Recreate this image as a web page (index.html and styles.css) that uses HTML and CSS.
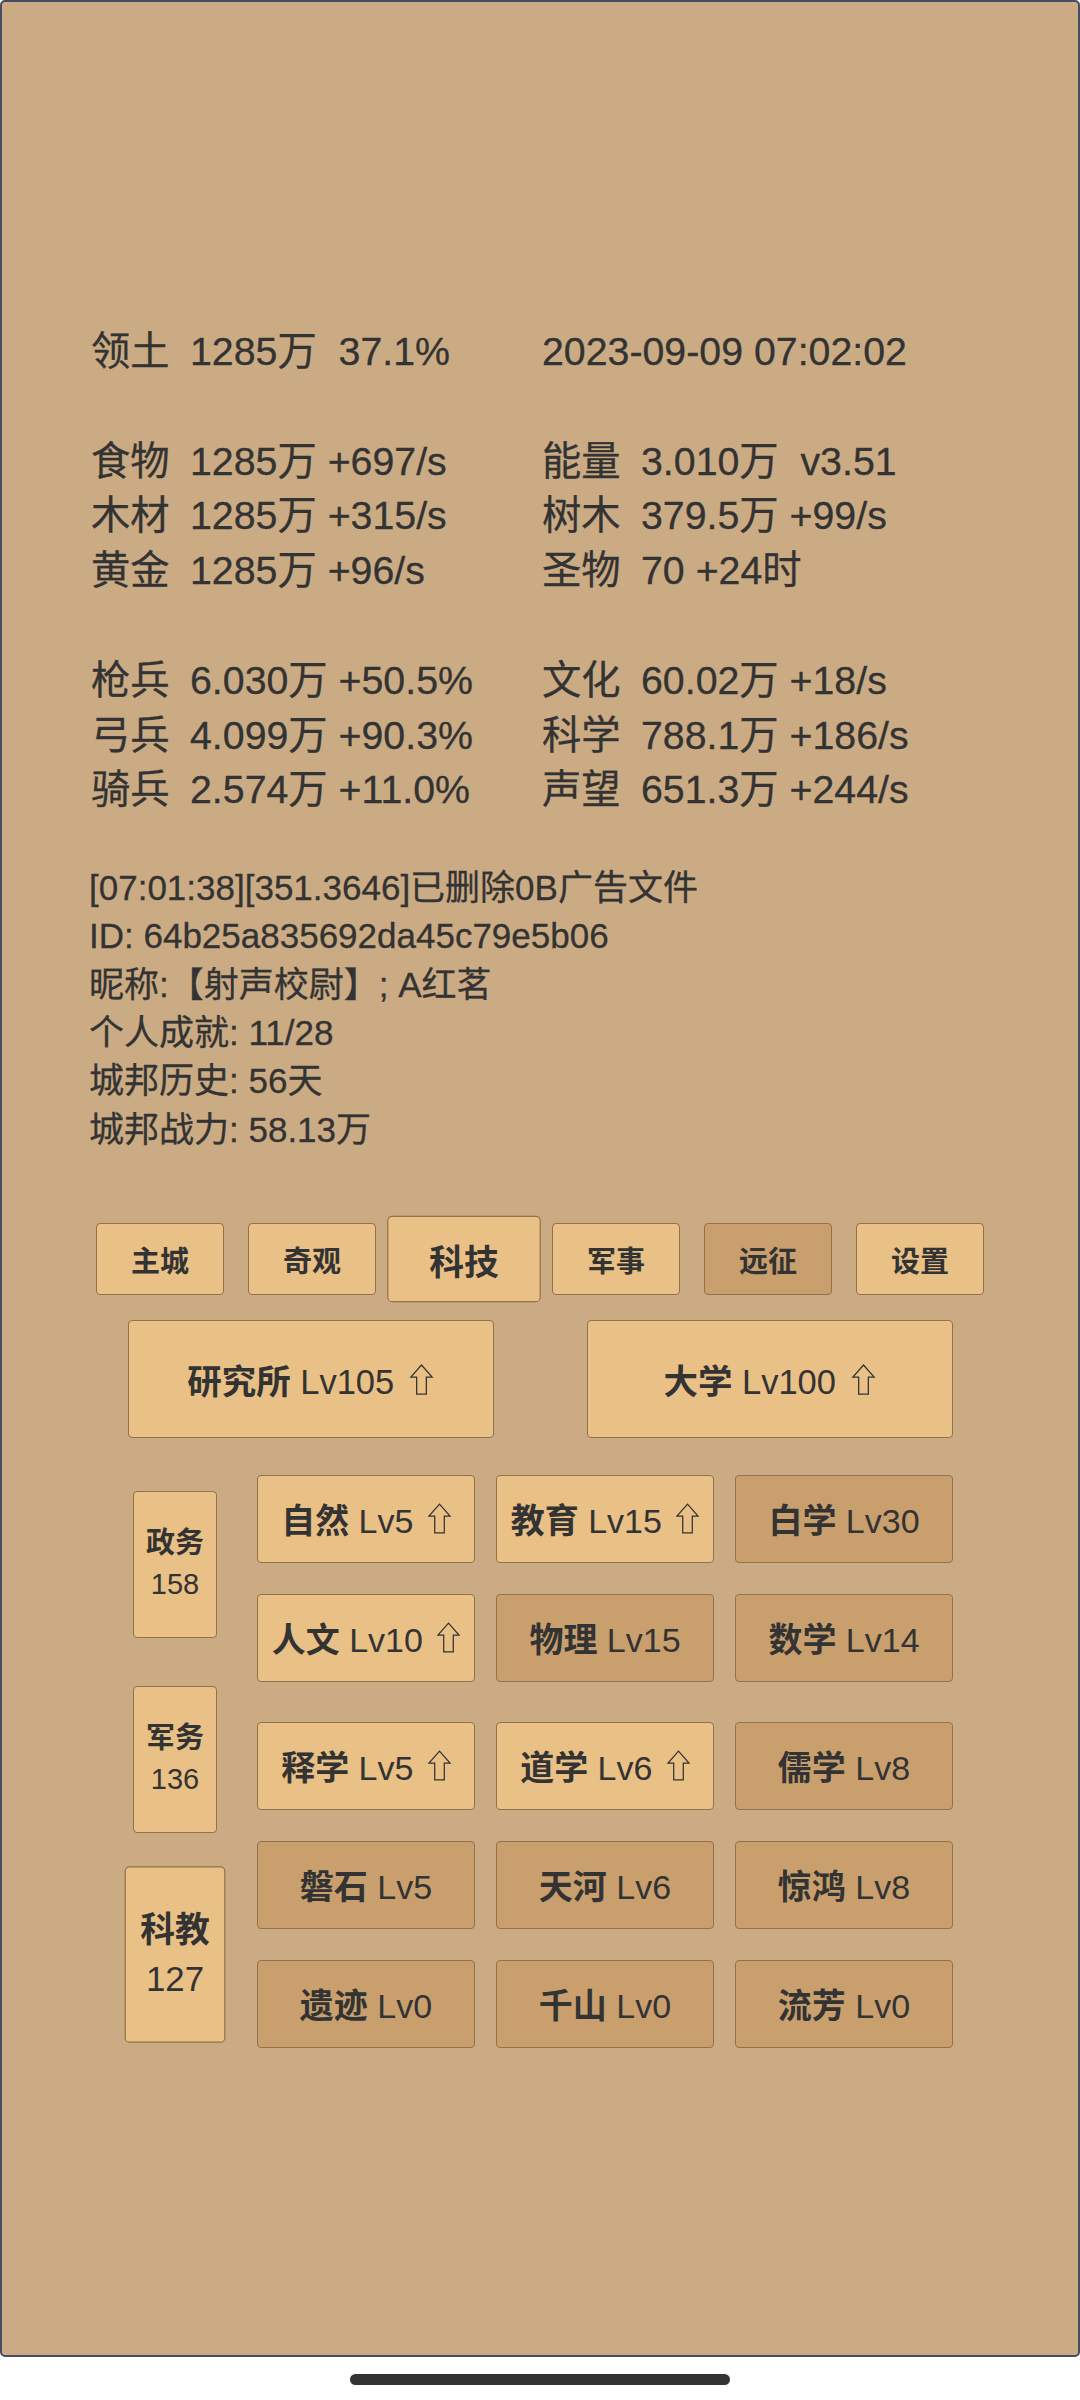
FILE: index.html
```html
<!DOCTYPE html>
<html lang="zh-CN">
<head>
<meta charset="utf-8">
<title>城邦</title>
<link rel="stylesheet" href="styles.css">
</head>
<body>
<div class="screen">
  <section class="stats">
    <div class="group">
      <div class="cell"><span class="lb">领土</span><span class="vl">1285万  37.1%</span></div>
      <div class="cell"><span class="vl">2023-09-09 07:02:02</span></div>
    </div>
    <div class="group">
      <div class="cell"><span class="lb">食物</span><span class="vl">1285万 +697/s</span></div>
      <div class="cell"><span class="lb">能量</span><span class="vl">3.010万  v3.51</span></div>
      <div class="cell"><span class="lb">木材</span><span class="vl">1285万 +315/s</span></div>
      <div class="cell"><span class="lb">树木</span><span class="vl">379.5万 +99/s</span></div>
      <div class="cell"><span class="lb">黄金</span><span class="vl">1285万 +96/s</span></div>
      <div class="cell"><span class="lb">圣物</span><span class="vl">70 +24时</span></div>
    </div>
    <div class="group">
      <div class="cell"><span class="lb">枪兵</span><span class="vl">6.030万 +50.5%</span></div>
      <div class="cell"><span class="lb">文化</span><span class="vl">60.02万 +18/s</span></div>
      <div class="cell"><span class="lb">弓兵</span><span class="vl">4.099万 +90.3%</span></div>
      <div class="cell"><span class="lb">科学</span><span class="vl">788.1万 +186/s</span></div>
      <div class="cell"><span class="lb">骑兵</span><span class="vl">2.574万 +11.0%</span></div>
      <div class="cell"><span class="lb">声望</span><span class="vl">651.3万 +244/s</span></div>
    </div>
  </section>

  <section class="info">
    <div class="line">[07:01:38][351.3646]已删除0B广告文件</div>
    <div class="line">ID: 64b25a835692da45c79e5b06</div>
    <div class="line">昵称:【射声校尉】; A红茗</div>
    <div class="line">个人成就: 11/28</div>
    <div class="line">城邦历史: 56天</div>
    <div class="line">城邦战力: 58.13万</div>
  </section>

  <nav class="tabs">
    <div class="btn tab"><span class="t"><b>主城</b></span></div>
    <div class="btn tab"><span class="t"><b>奇观</b></span></div>
    <div class="btn tab active"><span class="t"><b>科技</b></span></div>
    <div class="btn tab"><span class="t"><b>军事</b></span></div>
    <div class="btn tab dark"><span class="t"><b>远征</b></span></div>
    <div class="btn tab"><span class="t"><b>设置</b></span></div>
  </nav>

  <div class="big-row">
    <div class="btn big"><span class="t"><b>研究所</b> Lv105 <svg class="up" viewBox="0 0 24 32"><path d="M12 1 L23 13.5 L17 13.5 L17 31 L7 31 L7 13.5 L1 13.5 Z"/></svg></span></div>
    <div class="btn big"><span class="t"><b>大学</b> Lv100 <svg class="up" viewBox="0 0 24 32"><path d="M12 1 L23 13.5 L17 13.5 L17 31 L7 31 L7 13.5 L1 13.5 Z"/></svg></span></div>
  </div>

  <div class="lower">
    <div class="side">
      <div class="btn sbtn"><b>政务</b><span>158</span></div>
      <div class="btn sbtn"><b>军务</b><span>136</span></div>
      <div class="btn sbtn active"><b>科教</b><span>127</span></div>
    </div>
    <div class="grids">
      <div class="grid">
        <div class="btn cellbtn"><span class="t"><b>自然</b> Lv5 <svg class="up" viewBox="0 0 24 32"><path d="M12 1 L23 13.5 L17 13.5 L17 31 L7 31 L7 13.5 L1 13.5 Z"/></svg></span></div>
        <div class="btn cellbtn"><span class="t"><b>教育</b> Lv15 <svg class="up" viewBox="0 0 24 32"><path d="M12 1 L23 13.5 L17 13.5 L17 31 L7 31 L7 13.5 L1 13.5 Z"/></svg></span></div>
        <div class="btn cellbtn dark"><span class="t"><b>白学</b> Lv30</span></div>

        <div class="btn cellbtn"><span class="t"><b>人文</b> Lv10 <svg class="up" viewBox="0 0 24 32"><path d="M12 1 L23 13.5 L17 13.5 L17 31 L7 31 L7 13.5 L1 13.5 Z"/></svg></span></div>
        <div class="btn cellbtn dark"><span class="t"><b>物理</b> Lv15</span></div>
        <div class="btn cellbtn dark"><span class="t"><b>数学</b> Lv14</span></div>
      </div>
      <div class="grid">
        <div class="btn cellbtn"><span class="t"><b>释学</b> Lv5 <svg class="up" viewBox="0 0 24 32"><path d="M12 1 L23 13.5 L17 13.5 L17 31 L7 31 L7 13.5 L1 13.5 Z"/></svg></span></div>
        <div class="btn cellbtn"><span class="t"><b>道学</b> Lv6 <svg class="up" viewBox="0 0 24 32"><path d="M12 1 L23 13.5 L17 13.5 L17 31 L7 31 L7 13.5 L1 13.5 Z"/></svg></span></div>
        <div class="btn cellbtn dark"><span class="t"><b>儒学</b> Lv8</span></div>

        <div class="btn cellbtn dark"><span class="t"><b>磐石</b> Lv5</span></div>
        <div class="btn cellbtn dark"><span class="t"><b>天河</b> Lv6</span></div>
        <div class="btn cellbtn dark"><span class="t"><b>惊鸿</b> Lv8</span></div>

        <div class="btn cellbtn dark"><span class="t"><b>遗迹</b> Lv0</span></div>
        <div class="btn cellbtn dark"><span class="t"><b>千山</b> Lv0</span></div>
        <div class="btn cellbtn dark"><span class="t"><b>流芳</b> Lv0</span></div>
      </div>
    </div>
  </div>
</div>
<div class="home"><div class="home-bar"></div></div>
</body>
</html>
```

FILE: styles.css
```css
* { box-sizing: border-box; }

html, body {
  margin: 0;
  padding: 0;
  background: #ffffff;
}

body {
  width: 1080px;
  height: 2400px;
  overflow: hidden;
  font-family: "Liberation Sans", "Noto Sans CJK SC", sans-serif;
  font-weight: 400;
  color: #333333;
}

b { font-weight: 700; }

.screen {
  height: 2357px;
  overflow: hidden;
  background: #cbab83;
  border: 2px solid #474b63;
  border-radius: 5px;
  padding-top: 322px;
}

/* ---------- stats ---------- */
.stats {
  padding-left: 89px;
  font-size: 39.3px;
  line-height: 54.8px;
  -webkit-text-stroke: 0.3px #333333;
}

.group {
  display: grid;
  grid-template-columns: 451px auto;
  margin-bottom: 54.8px;
}

.group:last-child { margin-bottom: 0; }

.cell { white-space: pre; height: 54.8px; }

.lb {
  display: inline-block;
  width: 99px;
}

.vl { white-space: pre; }

/* ---------- info ---------- */
.info {
  margin-top: 47px;
  padding-left: 87px;
  font-size: 35px;
  line-height: 48.3px;
  -webkit-text-stroke: 0.3px #333333;
}

.line { white-space: pre; }

/* ---------- buttons ---------- */
.btn {
  display: flex;
  align-items: center;
  justify-content: center;
  background: #e9c085;
  border: 1.5px solid #93714b;
  border-radius: 4px;
  white-space: pre;
}

.btn.dark { background: #c99f6e; }

.t { white-space: pre; }

.up {
  width: 23px;
  height: 31px;
  margin-left: 5px;
  vertical-align: -1px;
}

.up path {
  fill: none;
  stroke: #333333;
  stroke-width: 1.3;
  stroke-linejoin: miter;
}

.tabs {
  margin-top: 69px;
  display: flex;
  justify-content: center;
  gap: 24px;
}

.tab {
  width: 128px;
  height: 72px;
  font-size: 29px;
}

.tab.active,
.sbtn.active {
  transform: scale(1.2);
}

.big-row {
  margin-top: 25px;
  display: flex;
  justify-content: center;
  gap: 93px;
}

.big {
  width: 366px;
  height: 118px;
  font-size: 34.5px;
}

.big .up {
  width: 25px;
}

.lower {
  margin-top: 37px;
  padding-left: 131px;
  display: flex;
  align-items: flex-start;
  gap: 40px;
}

.side {
  margin-top: 16px;
  display: flex;
  flex-direction: column;
  gap: 48px;
}

.sbtn {
  width: 84px;
  height: 147px;
  flex-direction: column;
  font-size: 29px;
  line-height: 41px;
}

.grids {
  display: flex;
  flex-direction: column;
  gap: 40px;
}

.grid {
  display: grid;
  grid-template-columns: repeat(3, 218px);
  grid-auto-rows: 88px;
  column-gap: 21px;
  row-gap: 31px;
}

.cellbtn {
  font-size: 34px;
}

/* ---------- home indicator ---------- */
.home {
  height: 43px;
  display: flex;
  justify-content: center;
  padding-top: 17px;
}

.home-bar {
  width: 380px;
  height: 11px;
  border-radius: 6px;
  background: #333333;
}
```
